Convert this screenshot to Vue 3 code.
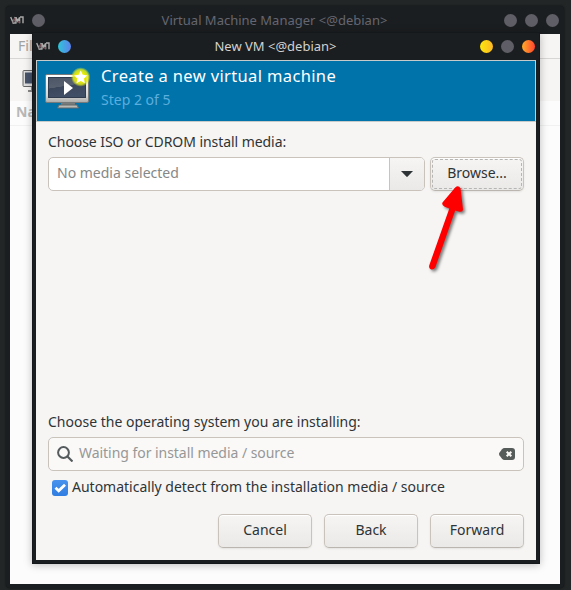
<script setup>
</script>

<template>
  <main class="desktop">
    <section class="window manager">
      <header class="titlebar">
        <svg class="vm" width="14" height="8" viewBox="0 0 14 8"><path d="M.7 1l2.4 5.8L5.2 1M6 7.3V1.2L7.8 5l1.8-3.8V7.3M10 1h3v6.3M2.5 7h4" /><path class="red" d="M3 6.5L5 2M8 6h2" /></svg>
        <i class="dot"></i>
        <h1>Virtual Machine Manager &lt;@debian&gt;</h1>
        <i class="dot"></i><i class="dot"></i><i class="dot"></i>
      </header>
      <div class="manager-body">
        <div class="menubar">File</div>
        <div class="toolbar">
          <svg width="26" height="24" viewBox="0 0 26 24"><rect x="1" y="1.5" width="24" height="16" rx="1" fill="#ddd" stroke="#666" /><rect x="3" y="3.5" width="20" height="11" fill="#46536a" /><path d="M9 18h8v3H9zM6 21h14v2H6z" fill="#888" /></svg>
        </div>
        <div class="columns">Name</div>
      </div>
    </section>

    <section class="window dialog">
      <header class="titlebar">
        <svg class="vm" width="14" height="8" viewBox="0 0 14 8"><path d="M.7 1l2.4 5.8L5.2 1M6 7.3V1.2L7.8 5l1.8-3.8V7.3M10 1h3v6.3M2.5 7h4" /><path class="red" d="M3 6.5L5 2M8 6h2" /></svg>
        <i class="dot blue"></i>
        <h1>New VM &lt;@debian&gt;</h1>
        <i class="dot yellow"></i><i class="dot"></i><i class="dot orange"></i>
      </header>
      <div class="dialog-body">
        <div class="banner">
          <svg class="monitor" width="48" height="48" viewBox="0 0 48 48">
            <defs>
              <linearGradient id="bezel" x1="0" y1="0" x2="0" y2="1"><stop offset="0" stop-color="#fff" /><stop offset=".75" stop-color="#d8d8d5" /><stop offset="1" stop-color="#aaa" /></linearGradient>
              <linearGradient id="screen" x1="0" y1="0" x2=".3" y2="1"><stop offset="0" stop-color="#4c5565" /><stop offset=".5" stop-color="#57606f" /><stop offset=".52" stop-color="#3b465b" /><stop offset="1" stop-color="#414f66" /></linearGradient>
              <radialGradient id="glow"><stop offset=".4" stop-color="#f0f000" /><stop offset=".75" stop-color="#dfea16" stop-opacity=".85" /><stop offset="1" stop-color="#d8ee20" stop-opacity="0" /></radialGradient>
            </defs>
            <path d="M18 36h14v4H18z" fill="#777b7b" />
            <path d="M16 39h18l1.5 3H14.5z" fill="#b9b9b5" stroke="#62696b" />
            <rect x="2.5" y="8.5" width="43" height="28" rx="1.5" fill="url(#bezel)" stroke="#777a7b" />
            <rect x="5.5" y="11.5" width="37" height="20" fill="url(#screen)" stroke="#303b4e" />
            <path d="M21 15v14l9-7z" fill="#fff" />
            <circle cx="37.7" cy="11" r="9.8" fill="url(#glow)" />
            <path d="M37.7 4.5l2 4.3 4.6.6-3.4 3.2.9 4.7-4.1-2.3-4.2 2.3.9-4.7-3.3-3.2 4.6-.6z" fill="#fff" />
          </svg>
          <div class="banner-text">
            <h2>Create a new virtual machine</h2>
            <p>Step 2 of 5</p>
          </div>
        </div>

        <div class="content">
          <label class="label media-label">Choose ISO or CDROM install media:</label>
          <div class="media-row">
            <div class="combo">
              <div class="combo-entry">No media selected</div>
              <div class="combo-button"><svg width="12" height="6" viewBox="0 0 12 6"><path d="M0 0h12L6.7 5.6q-.7.6-1.4 0z" fill="#2e3436" /></svg></div>
            </div>
            <button class="button focused">Browse...</button>
          </div>

          <label class="label os-label">Choose the operating system you are installing:</label>
          <div class="search">
            <svg width="16" height="16" viewBox="0 0 16 16" fill="none" stroke="#555b5c"><circle cx="6.5" cy="6.5" r="5.4" stroke-width="2" /><path d="M10.5 10.5l5 5" stroke-width="2.2" /></svg>
            <span>Waiting for install media / source</span>
            <svg width="16" height="12" viewBox="0 0 16 12"><path d="M5.5 0H13q3 0 3 3v6q0 3-3 3H5.5Q4 12 3 10.8L.4 7.2Q-.4 6 .4 4.8L3 1.2Q4 0 5.5 0z" fill="#555c59" /><path d="M7.7 3.7l4.6 4.6m0-4.6L7.7 8.3" stroke="#faf9f8" stroke-width="2" /></svg>
          </div>
          <div class="check-row">
            <span class="checkbox"><svg width="16" height="16" viewBox="0 0 16 16"><path d="M3.5 7.8l3.2 3L13 4.8" fill="none" stroke="#fff" stroke-width="2.8" /></svg></span>
            <span>Automatically detect from the installation media / source</span>
          </div>
          <div class="actions">
            <button class="button">Cancel</button>
            <button class="button">Back</button>
            <button class="button">Forward</button>
          </div>
        </div>
      </div>
    </section>

    <svg class="arrow" width="50" height="100" viewBox="0 0 50 100">
      <path d="M35.2 7.5Q38.3 4.5 40.5 8.2L43 29.5Q42.8 32.5 39.3 31.7L35.2 30.4 15.3 87.5Q13 90.7 10.3 89 8.7 88 9.2 85.5L29.3 28.4 24.7 26.7Q21.3 25 22.5 22.5z" fill="#fe0000" />
    </svg>
  </main>
</template>

<style>
body { margin: 0; background: #232627; }
</style>

<style scoped>
* { box-sizing: border-box; }
.desktop { position: relative; width: 571px; height: 590px; overflow: hidden; background: #232627; color: #2e3436; font: 14px/19px "Noto Sans", sans-serif; }
.window { position: absolute; background: #1b1e20; }
.manager { left: 6px; top: 6px; width: 558px; height: 582px; padding: 0 4px 4px; border-radius: 4px; box-shadow: 0 0 2px #0c0e10; }
.dialog { left: 32px; top: 32px; width: 508px; height: 532px; padding: 0 4px 4px; box-shadow: inset 0 0 0 1px #14181b, 0 1px 8px rgba(0, 0, 0, .25); }
.titlebar { display: flex; align-items: center; height: 28px; padding-right: 1px; gap: 8px; }
.titlebar h1 { flex: 1; margin: 0; text-align: center; color: #d2d2d1; font-size: 13px; line-height: 18px; font-weight: 400; white-space: nowrap; }
.manager .titlebar h1 { color: #656671; }
.vm { flex: none; fill: none; stroke: #aaa; stroke-width: 1.4; }
.vm .red { stroke: #704950; }
.dot { flex: none; width: 13px; height: 13px; border-radius: 50%; background: #5f5e66; }
.dot.blue { background: linear-gradient(90deg, #30c5d9, #5d82ee); }
.dot.yellow { background: linear-gradient(90deg, #fbe70c, #fdb727); }
.dot.orange { background: linear-gradient(90deg, #ffac29, #ff422f); }
.manager-body { height: 550px; background: #fcfcfc; color: #a2a2a2; }
.menubar { height: 25px; padding: 2px 8px; background: #f6f5f4; border-bottom: 1px solid #d8d6d4; }
.toolbar { height: 42px; padding: 10px 12px; background: #f6f5f4; }
.columns { height: 25px; padding: 1px 6px; border-bottom: 1px solid #f1f1f1; color: #b8b8b8; font-weight: 700; }
.dialog-body { height: 500px; background: #f6f5f4; }
.banner { display: flex; height: 62px; padding: 5px 6px; gap: 10px; background: #0073ab; border: 1px solid #c7ccca; color: #fff; }
.banner-text h2 { margin: 0; font-size: 16.5px; line-height: 19px; font-weight: 400; letter-spacing: .36px; white-space: nowrap; }
.banner-text p { margin: 5px 0 0; color: #5baedd; }
.content { padding: 10px 12px 0; }
.label { display: block; height: 20px; white-space: nowrap; }
.media-label { letter-spacing: -.06px; }
.media-row { display: flex; gap: 5px; height: 34px; margin-top: 5px; }
.combo { display: flex; width: 377px; border: 1px solid #c9c3bc; border-radius: 5px; background: #fff; overflow: hidden; }
.combo-entry { flex: 1; padding: 5px 8px; color: #858887; }
.combo-button { display: flex; align-items: center; justify-content: center; width: 35px; border-left: 1px solid #c9c3bc; background: linear-gradient(#f6f5f4, #ebe9e7); }
.button { width: 94px; height: 34px; padding: 0 0 4px; border: 1px solid #c9c3bc; border-bottom-color: #bab5ae; border-radius: 5px; background: linear-gradient(#f6f5f4, #ebe9e7); box-shadow: inset 0 1px #fff, 0 1px 2px rgba(0, 0, 0, .08); font: inherit; color: inherit; }
.focused { outline: 1px dashed #b5b5b3; outline-offset: -3px; }
.os-label { margin-top: 221px; }
.search { display: flex; align-items: center; gap: 6px; height: 34px; margin-top: 5px; padding: 0 8px; border: 1px solid #c9c3bc; border-radius: 5px; background: #faf9f8; color: #969797; }
.search span { flex: 1; padding-bottom: 3px; letter-spacing: -.04px; }
.check-row { display: flex; align-items: center; gap: 4px; height: 19px; margin: 6px 0 0 4px; white-space: nowrap; }
.checkbox { width: 16px; height: 16px; margin-top: 3px; border-radius: 3px; background: linear-gradient(#4793ed, #2f7de1); }
.checkbox svg { display: block; }
.actions { display: flex; justify-content: flex-end; gap: 12px; margin-top: 18px; }
.arrow { position: absolute; left: 420px; top: 180px; filter: drop-shadow(2px 2px 1.5px rgba(0, 0, 0, .5)); }
</style>
